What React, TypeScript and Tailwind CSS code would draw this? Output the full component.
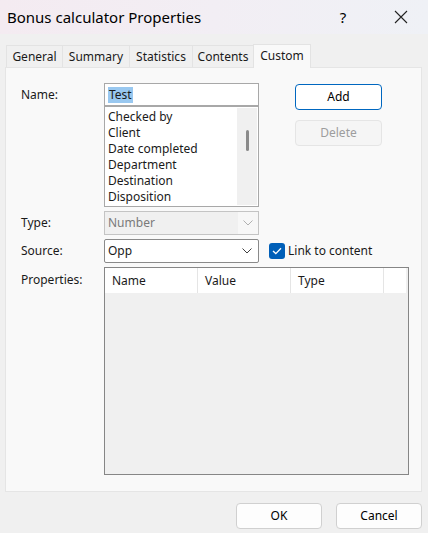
import React from "react";

const font = { fontFamily: '"Noto Sans", "Segoe UI", sans-serif' };

const Chevron = ({ color = "#404040" }: { color?: string }) => (
  <svg width="12" height="8" viewBox="0 0 12 8" fill="none">
    <polyline points="1.5,1.5 6,6 10.5,1.5" stroke={color} strokeWidth="1" />
  </svg>
);

const tabs = [
  { label: "General", w: "w-[57px]" },
  { label: "Summary", w: "w-[68px]" },
  { label: "Statistics", w: "w-[64px]" },
  { label: "Contents", w: "w-[62px]" },
];

const items = ["Checked by", "Client", "Date completed", "Department", "Destination", "Disposition"];

export default function App() {
  return (
    <div className="w-[428px] h-[533px] bg-[#f0f0f0] flex flex-col text-[12px] text-[#1a1a1a] overflow-hidden" style={font}>
      {/* Barra de título */}
      <div className="h-[34px] flex items-center justify-between bg-gradient-to-r from-[#f4ebf1] via-[#f2eef4] to-[#eff1f6]">
        <span className="pl-[7px] text-[15px] text-black">Bonus calculator Properties</span>
        <div className="flex items-center h-full pr-[4px]">
          <span className="w-[46px] text-center text-[15px] text-black">?</span>
          <span className="w-[46px] h-full flex items-center justify-center ml-[12px]">
            <svg width="14" height="14" viewBox="0 0 14 14">
              <path d="M1 1 L13 13 M13 1 L1 13" stroke="#222" strokeWidth="1.1" />
            </svg>
          </span>
        </div>
      </div>

      {/* Pestañas */}
      <div className="flex items-end ml-[6px] mt-[9px] h-[24px]">
        {tabs.map((t) => (
          <div
            key={t.label}
            className={`${t.w} h-[22px] border border-b-0 border-[#e3e3e3] -ml-px first:ml-0 flex items-center justify-center pt-[1px]`}
          >
            {t.label}
          </div>
        ))}
        <div className="w-[58px] h-[24px] -ml-px -mb-px bg-[#f9f9f9] border border-b-0 border-[#e3e3e3] flex items-center justify-center pb-[2px] relative z-10">
          Custom
        </div>
      </div>

      {/* Panel */}
      <div className="ml-[5px] w-[417px] h-[425px] border border-[#e5e5e5] bg-[#f9f9f9] pt-[15px] pl-[15px]">
        <div className="flex">
          <div className="w-[83px] pt-[4px] leading-[16px]">Name:</div>
          <div className="w-[155px] flex flex-col">
            <div className="h-[23px] bg-white border border-[#a8a8a8] flex items-center pl-[3px]">
              <span className="bg-[#99c8f0] leading-[16px] px-px">Test</span>
            </div>
            <div className="h-[101px] bg-white border border-[#a8a8a8] flex">
              <div className="flex-1 pl-[3px] pt-[2px] leading-[16px] overflow-hidden">
                {items.map((i) => (
                  <div key={i} className="whitespace-nowrap">{i}</div>
                ))}
              </div>
              <div className="w-[20px] bg-[#f0f0f0] my-px mr-px flex justify-center pt-[22px]">
                <div className="w-[3px] h-[21px] rounded-full bg-[#8a8a8a]" />
              </div>
            </div>
          </div>
          <div className="ml-[36px] flex flex-col gap-[10px] pt-[1px]">
            <button className="w-[87px] h-[26px] rounded-[4px] bg-white border border-[#0067c0] text-black">Add</button>
            <button className="w-[87px] h-[26px] rounded-[4px] bg-[#f5f5f5] border border-[#e5e5e5] text-[#9d9d9d]">Delete</button>
          </div>
        </div>

        <div className="flex items-center mt-[4px]">
          <div className="w-[83px]">Type:</div>
          <div className="w-[155px] h-[24px] bg-[#f0f0f0] border border-[#c4c4c4] flex items-center">
            <span className="flex-1 pl-[3px] text-[#7a7a7a]">Number</span>
            <span className="w-[20px] h-[22px] bg-[#f7f7f7] flex items-center justify-center">
              <Chevron color="#b0b0b0" />
            </span>
          </div>
        </div>

        <div className="flex items-center mt-[4px]">
          <div className="w-[83px]">Source:</div>
          <div className="w-[155px] h-[24px] bg-white border border-[#8a8a8a] rounded-[2px] flex items-center">
            <span className="flex-1 pl-[3px]">Opp</span>
            <span className="w-[20px] flex items-center justify-center pr-[2px]">
              <Chevron />
            </span>
          </div>
          <div className="ml-[10px] w-[16px] h-[16px] rounded-[3px] bg-[#005fb8] flex items-center justify-center">
            <svg width="10" height="8" viewBox="0 0 10 8" fill="none">
              <polyline points="1,4 3.8,6.6 9,1.2" stroke="white" strokeWidth="1.3" />
            </svg>
          </div>
          <span className="ml-[3px]">Link to content</span>
        </div>

        <div className="flex mt-[4px]">
          <div className="w-[83px] pt-[5px] leading-[16px]">Properties:</div>
          <div className="w-[305px] h-[208px] border border-[#868686] bg-[#f0f0f0] flex flex-col">
            <div className="h-[25px] flex bg-white mr-[2px]">
              <div className="w-[93px] border-r border-[#e5e5e5] pl-[7px] flex items-center">Name</div>
              <div className="w-[93px] border-r border-[#e5e5e5] pl-[7px] flex items-center">Value</div>
              <div className="w-[93px] border-r border-[#e5e5e5] pl-[7px] flex items-center">Type</div>
              <div className="flex-1" />
            </div>
          </div>
        </div>
      </div>

      {/* Botones inferiores */}
      <div className="flex justify-end gap-[14px] mt-[11px] pr-[6px]">
        <button className="w-[86px] h-[26px] rounded-[4px] bg-[#fdfdfd] border border-[#d0d0d0] text-black">OK</button>
        <button className="w-[86px] h-[26px] rounded-[4px] bg-[#fdfdfd] border border-[#d0d0d0] text-black">Cancel</button>
      </div>
    </div>
  );
}
